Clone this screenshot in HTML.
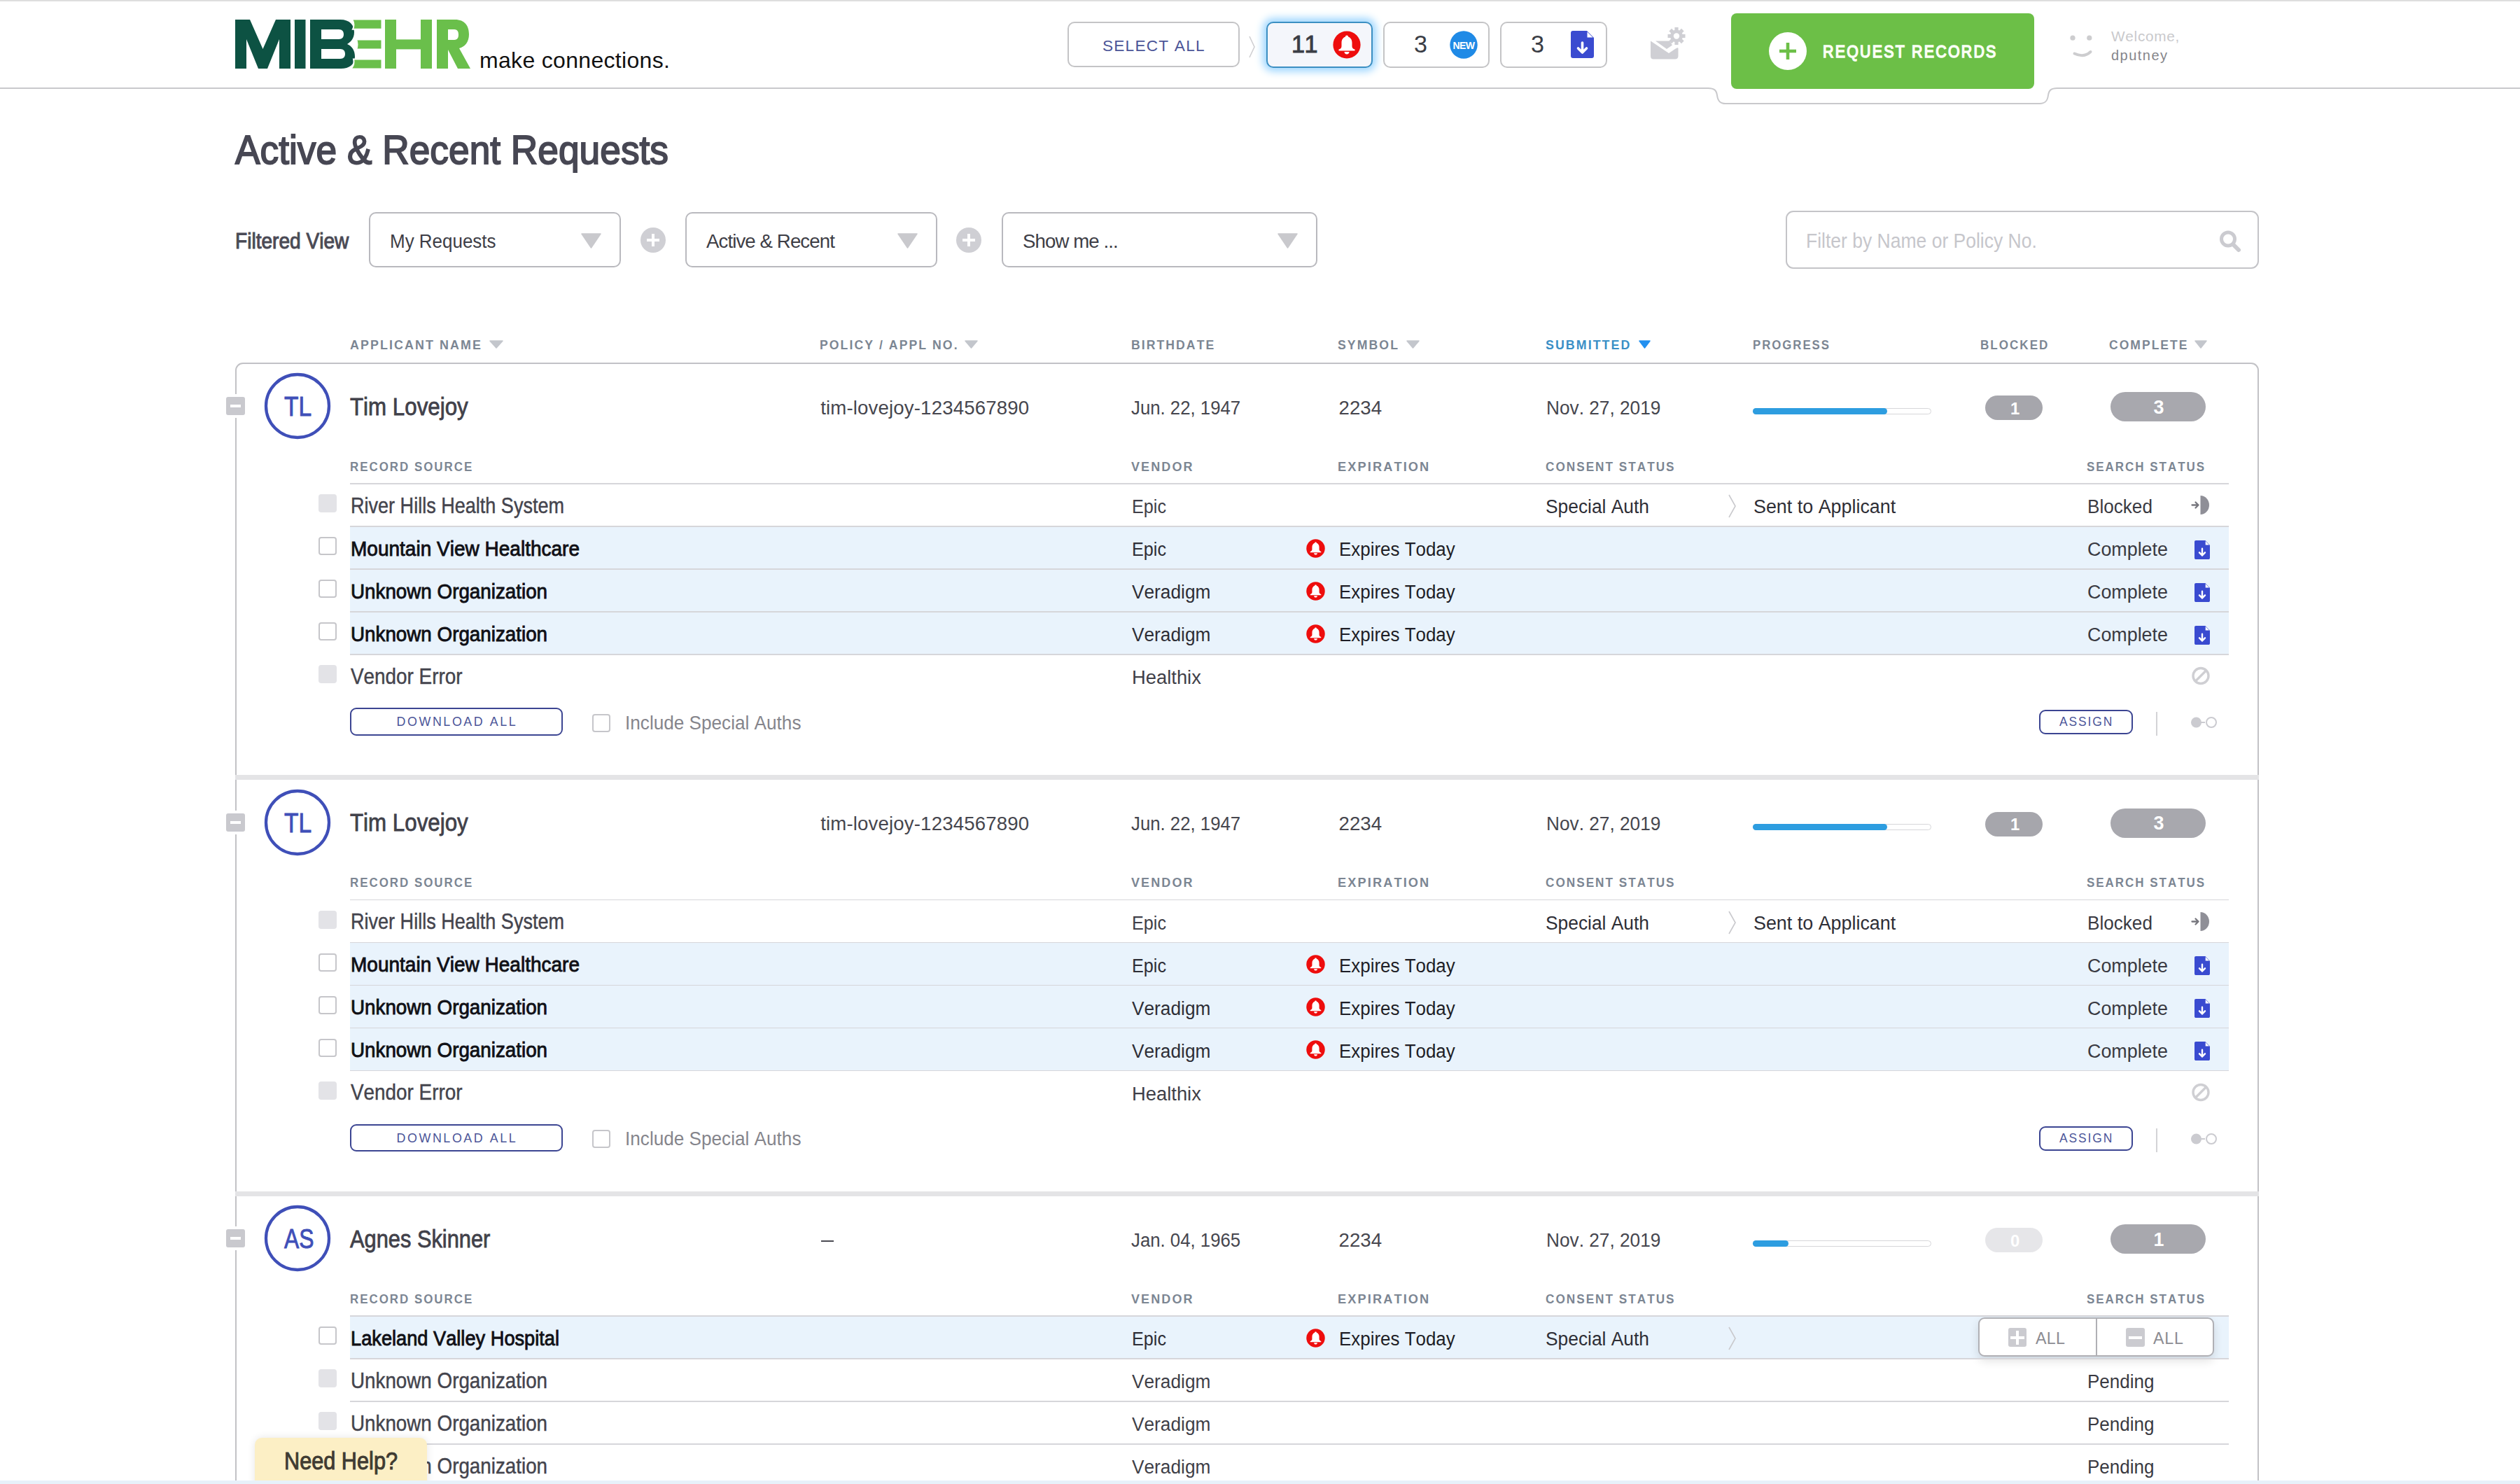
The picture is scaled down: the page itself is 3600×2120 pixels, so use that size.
<!DOCTYPE html>
<html><head><meta charset="utf-8"><title>MIB EHR</title>
<style>
html,body{margin:0;padding:0;background:#fff;}
body{width:3600px;height:2120px;position:relative;overflow:hidden;font-family:"Liberation Sans",sans-serif;}
.t{position:absolute;white-space:nowrap;font-kerning:none;font-feature-settings:"kern" 0,"liga" 0;}
.r{position:absolute;}
svg{display:block;}
</style></head><body>
<div class="r" style="left:0px;top:0px;width:3600px;height:1.5px;background:#dedede;"></div>
<svg class="r" style="left:0;top:0" width="3600" height="160"><path d="M0 126 H2440 C2449 126 2452 129 2453 136 C2454 144 2457 148 2465 148 H2914 C2922 148 2925 144 2926 136 C2927 129 2930 126 2939 126 H3600" fill="none" stroke="#c9c9cc" stroke-width="2"/></svg>
<svg class="r" style="left:0;top:0" width="1000" height="120">
<polygon fill="#0d5243" points="336,28 357,28 375.5,70 394,28 415,28 415,98 399,98 399,56 382,98 369,98 352,56 352,98 336,98"/>
<rect fill="#0d5243" x="421" y="28" width="15.5" height="70"/>
<path fill="#0d5243" d="M443 28 H486 C500 28 506 36 506 46 C506 55 501 60 496 63 C503 66 507 72 507 81 C507 92 499 98 487 98 H443 Z M459 42 V56 H484 C489 56 491 53 491 49 C491 45 489 42 484 42 Z M459 70 V84 H486 C491 84 493 81 493 77 C493 73 491 70 486 70 Z"/>
<path fill="#6abf4b" stroke="#fff" stroke-width="2" d="M503 27.5 H545.5 V41.7 H504 C506 38 506 32 503 27.5 Z"/>
<path fill="#6abf4b" stroke="#fff" stroke-width="2" d="M509 56.4 H545.5 V70.5 H509 C511 67 511 60 509 56.4 Z"/>
<path fill="#6abf4b" stroke="#fff" stroke-width="2" d="M505 84.4 H545.5 V98.5 H501 C505 95 506 89 505 84.4 Z"/>
<rect fill="#6abf4b" x="550" y="28" width="16" height="70"/>
<rect fill="#6abf4b" x="601" y="28" width="16" height="70"/>
<rect fill="#6abf4b" x="566" y="56.4" width="35" height="14"/>
<path fill="#6abf4b" d="M624 28 H650 C664 28 670 37 670 49 C670 60 664 67 656 69 L672 98 H654 L640 71 V98 H624 Z M640 42 V57 H649 C654 57 655 53 655 49.5 C655 46 654 42 649 42 Z"/>
</svg>
<div class="t" style="left:685.00px;top:67.41px;font-size:32px;line-height:38px;color:#111;letter-spacing:0.32px;">make connections.</div>
<div class="r" style="left:1525px;top:31px;width:246px;height:65px;border:2px solid #c4c4c6;border-radius:10px;box-sizing:border-box;background:#fff;"></div>
<div class="t" style="left:1575.00px;top:51.64px;font-size:22.67px;line-height:27px;color:#4b5598;letter-spacing:1.20px;">SELECT ALL</div>
<svg class="r" style="left:1780px;top:48px" width="20" height="40"><path d="M5 4 L12 19 L5 34" fill="none" stroke="#cfcfd2" stroke-width="1.6"/></svg>
<div class="r" style="left:1809px;top:31px;width:152px;height:66px;border:2px solid #3b8fc2;border-radius:10px;box-sizing:border-box;background:#f4f6fb;box-shadow:0 0 12px 5px #9dd6ff;"></div>
<div class="t" style="left:1845.00px;top:42.66px;font-size:34.16px;line-height:41px;color:#3a3d45;-webkit-text-stroke:1.0px #3a3d45;">1</div>
<div class="t" style="left:1863.50px;top:42.66px;font-size:34.16px;line-height:41px;color:#3a3d45;-webkit-text-stroke:1.0px #3a3d45;">1</div>
<svg class="r" style="left:1904px;top:44px" width="40" height="40" viewBox="0 0 40 40"><circle cx="20" cy="20" r="19.6" fill="#ee0d0d"/><path fill="#fff" d="M20 6.5 C21.3 6.5 22 7.3 22 8.4 C25.5 9.6 27.5 12.8 27.5 17 V22 C27.5 24.5 29 26 31.5 26.5 V28.5 H8.5 V26.5 C11 26 12.5 24.5 12.5 22 V17 C12.5 12.8 14.5 9.6 18 8.4 C18 7.3 18.7 6.5 20 6.5 Z"/><path fill="#fff" d="M16.5 30 H23.5 C23.5 32.2 22 33.5 20 33.5 C18 33.5 16.5 32.2 16.5 30 Z"/></svg>
<div class="r" style="left:1976px;top:31px;width:152px;height:66px;border:2px solid #c4c4c6;border-radius:10px;box-sizing:border-box;background:#fff;"></div>
<div class="t" style="left:2020.00px;top:42.66px;font-size:34.16px;line-height:41px;color:#3a3d45;">3</div>
<svg class="r" style="left:2071px;top:44px" width="40" height="40"><circle cx="20" cy="20" r="19.7" fill="#1f8ae6"/><text x="20" y="25.5" text-anchor="middle" font-family="Liberation Sans" font-weight="700" font-size="14" fill="#fff" letter-spacing="-0.5">NEW</text></svg>
<div class="r" style="left:2143px;top:31px;width:153px;height:66px;border:2px solid #c4c4c6;border-radius:10px;box-sizing:border-box;background:#fff;"></div>
<div class="t" style="left:2187.00px;top:42.66px;font-size:34.16px;line-height:41px;color:#3a3d45;">3</div>
<svg class="r" style="left:2244px;top:43.6px" width="33" height="39" viewBox="0 0 33 39" preserveAspectRatio="none"><path fill="#3a4bd0" d="M3 0 H23 L33 10 V36 C33 37.8 31.8 39 30 39 H3 C1.2 39 0 37.8 0 36 V3 C0 1.2 1.2 0 3 0 Z"/><path fill="#fff" d="M23.5 1.5 L31.5 9.5 H23.5 Z"/><path fill="none" stroke="#fff" stroke-width="3.6" stroke-linecap="round" stroke-linejoin="round" d="M16.5 17 V31 M10.5 25 L16.5 31 L22.5 25"/></svg>
<svg class="r" style="left:2350px;top:34px" width="70" height="56">
<path fill="#cfcfd4" d="M8 24.5 L34 42 L41.5 37 C44 35 47.5 33 47.5 35 V46 C47.5 49 45.5 50.5 43 50.5 H12 C9.5 50.5 8 49 8 46 Z"/>
<path fill="#cfcfd4" d="M15 24.5 H35 L39 30.5 L31 36 Z"/>
<g transform="translate(45 17.5)"><circle r="9" fill="#cfcfd4"/><g fill="#cfcfd4"><rect x="-2.6" y="-12.5" width="5.2" height="25"/><rect x="-2.6" y="-12.5" width="5.2" height="25" transform="rotate(45)"/><rect x="-2.6" y="-12.5" width="5.2" height="25" transform="rotate(90)"/><rect x="-2.6" y="-12.5" width="5.2" height="25" transform="rotate(135)"/></g><circle r="4.2" fill="#fff"/></g>
</svg>
<div class="r" style="left:2473px;top:19px;width:433px;height:108px;background:#6cbf47;border-radius:8px;"></div>
<svg class="r" style="left:2526px;top:45px" width="56" height="56"><circle cx="28" cy="28" r="27" fill="#fff"/><rect x="16" y="25.7" width="24" height="4.6" fill="#6cbf47"/><rect x="25.7" y="16" width="4.6" height="24" fill="#6cbf47"/></svg>
<div class="t" style="left:2604.00px;top:58.93px;font-size:24.71px;line-height:30px;color:#fafff5;-webkit-text-stroke:1.6px #fafff5;letter-spacing:2.60px;transform:scaleX(0.8641);transform-origin:0 0;">REQUEST RECORDS</div>
<svg class="r" style="left:2950px;top:44px" width="44" height="44"><circle cx="11" cy="10.2" r="3.6" fill="#cdcdcf"/><circle cx="34.8" cy="10.2" r="3.6" fill="#cdcdcf"/><path d="M13.5 32.5 Q27 39 36.5 30" fill="none" stroke="#cdcdcf" stroke-width="4" stroke-linecap="round"/></svg>
<div class="t" style="left:3016.00px;top:38.89px;font-size:20.79px;line-height:25px;color:#c9c9cc;letter-spacing:0.71px;">Welcome,</div>
<div class="t" style="left:3016.00px;top:67.07px;font-size:20px;line-height:24px;color:#85858a;letter-spacing:1.47px;">dputney</div>
<div class="t" style="left:336.00px;top:179.90px;font-size:57.12px;line-height:69px;color:#474753;-webkit-text-stroke:1.9px #474753;transform:scaleX(0.9330);transform-origin:0 0;">Active &amp; Recent Requests</div>
<div class="t" style="left:336.00px;top:325.52px;font-size:30.52px;line-height:37px;color:#4a4a55;-webkit-text-stroke:1.0px #4a4a55;transform:scaleX(0.9207);transform-origin:0 0;">Filtered View</div>
<div class="r" style="left:527px;top:303px;width:360px;height:79px;border:2px solid #b9b9be;border-radius:10px;box-sizing:border-box;background:#fff;"></div>
<div class="t" style="left:557.00px;top:328.32px;font-size:27.62px;line-height:33px;color:#3e3e46;transform:scaleX(0.9407);transform-origin:0 0;">My Requests</div>
<svg class="r" style="left:830px;top:333px" width="29" height="22"><path d="M1 1 H28 L14.5 21 Z" fill="#c9c9cd" stroke="#c9c9cd" stroke-width="1.5" stroke-linejoin="round"/></svg>
<div class="r" style="left:979px;top:303px;width:360px;height:79px;border:2px solid #b9b9be;border-radius:10px;box-sizing:border-box;background:#fff;"></div>
<div class="t" style="left:1009.00px;top:328.32px;font-size:27.62px;line-height:33px;color:#3e3e46;letter-spacing:-0.90px;">Active &amp; Recent</div>
<svg class="r" style="left:1282px;top:333px" width="29" height="22"><path d="M1 1 H28 L14.5 21 Z" fill="#c9c9cd" stroke="#c9c9cd" stroke-width="1.5" stroke-linejoin="round"/></svg>
<div class="r" style="left:1431px;top:303px;width:451px;height:79px;border:2px solid #b9b9be;border-radius:10px;box-sizing:border-box;background:#fff;"></div>
<div class="t" style="left:1461.00px;top:328.32px;font-size:27.62px;line-height:33px;color:#3e3e46;letter-spacing:-0.90px;">Show me ...</div>
<svg class="r" style="left:1825px;top:333px" width="29" height="22"><path d="M1 1 H28 L14.5 21 Z" fill="#c9c9cd" stroke="#c9c9cd" stroke-width="1.5" stroke-linejoin="round"/></svg>
<svg class="r" style="left:914px;top:324px" width="38" height="38"><circle cx="19" cy="19" r="18" fill="#cfcfd4"/><rect x="10" y="17" width="18" height="4" fill="#fff"/><rect x="17" y="10" width="4" height="18" fill="#fff"/></svg>
<svg class="r" style="left:1365px;top:324px" width="38" height="38"><circle cx="19" cy="19" r="18" fill="#cfcfd4"/><rect x="10" y="17" width="18" height="4" fill="#fff"/><rect x="17" y="10" width="4" height="18" fill="#fff"/></svg>
<div class="r" style="left:2551px;top:301px;width:676px;height:83px;border:2px solid #c4c4c8;border-radius:11px;box-sizing:border-box;background:#fff;"></div>
<div class="t" style="left:2580.00px;top:327.42px;font-size:29.07px;line-height:35px;color:#c6c6cb;transform:scaleX(0.9118);transform-origin:0 0;">Filter by Name or Policy No.</div>
<svg class="r" style="left:3168px;top:327px" width="36" height="36"><circle cx="15" cy="14.5" r="9.5" fill="none" stroke="#cbcbd0" stroke-width="5"/><path d="M22 22 L30 30" stroke="#cbcbd0" stroke-width="6" stroke-linecap="round"/></svg>
<div class="t" style="left:500.00px;top:480.95px;font-size:18.9px;line-height:23px;color:#7c8693;font-weight:700;letter-spacing:2.20px;transform:scaleX(0.9461);transform-origin:0 0;">APPLICANT NAME</div>
<svg class="r" style="left:699px;top:486px" width="20" height="12"><path d="M1 1 H19 L10.0 11 Z" fill="#c3c6cc" stroke="#c3c6cc" stroke-width="1.5" stroke-linejoin="round"/></svg>
<div class="t" style="left:1171.40px;top:480.95px;font-size:18.9px;line-height:23px;color:#7c8693;font-weight:700;letter-spacing:2.20px;transform:scaleX(0.9337);transform-origin:0 0;">POLICY / APPL NO.</div>
<svg class="r" style="left:1378px;top:486px" width="19" height="12"><path d="M1 1 H18 L9.5 11 Z" fill="#c3c6cc" stroke="#c3c6cc" stroke-width="1.5" stroke-linejoin="round"/></svg>
<div class="t" style="left:1616.00px;top:480.95px;font-size:18.9px;line-height:23px;color:#7c8693;font-weight:700;letter-spacing:2.20px;transform:scaleX(0.9328);transform-origin:0 0;">BIRTHDATE</div>
<div class="t" style="left:1911.40px;top:480.95px;font-size:18.9px;line-height:23px;color:#7c8693;font-weight:700;letter-spacing:2.20px;transform:scaleX(0.9359);transform-origin:0 0;">SYMBOL</div>
<svg class="r" style="left:2009px;top:486px" width="19" height="12"><path d="M1 1 H18 L9.5 11 Z" fill="#c3c6cc" stroke="#c3c6cc" stroke-width="1.5" stroke-linejoin="round"/></svg>
<div class="t" style="left:2208.20px;top:480.95px;font-size:18.9px;line-height:23px;color:#3a8fc6;font-weight:700;letter-spacing:2.20px;transform:scaleX(0.9415);transform-origin:0 0;">SUBMITTED</div>
<svg class="r" style="left:2341px;top:486px" width="17" height="12"><path d="M1 1 H16 L8.5 11 Z" fill="#2290f0" stroke="#2290f0" stroke-width="1.5" stroke-linejoin="round"/></svg>
<div class="t" style="left:2504.30px;top:480.95px;font-size:18.9px;line-height:23px;color:#7c8693;font-weight:700;letter-spacing:2.20px;transform:scaleX(0.8893);transform-origin:0 0;">PROGRESS</div>
<div class="t" style="left:2828.60px;top:480.95px;font-size:18.9px;line-height:23px;color:#7c8693;font-weight:700;letter-spacing:2.20px;transform:scaleX(0.9038);transform-origin:0 0;">BLOCKED</div>
<div class="t" style="left:3012.50px;top:480.95px;font-size:18.9px;line-height:23px;color:#7c8693;font-weight:700;letter-spacing:2.20px;transform:scaleX(0.9262);transform-origin:0 0;">COMPLETE</div>
<svg class="r" style="left:3135px;top:486px" width="18" height="12"><path d="M1 1 H17 L9.0 11 Z" fill="#c3c6cc" stroke="#c3c6cc" stroke-width="1.5" stroke-linejoin="round"/></svg>
<div class="r" style="left:336px;top:518px;width:2891px;height:1682px;border:2px solid #c2c2c6;border-radius:11px;box-sizing:border-box;"></div>
<div class="r" style="left:319px;top:563.4px;width:35px;height:34.0px;background:#fff;"></div>
<div class="r" style="left:323px;top:567.4px;width:26.600000000000023px;height:26.0px;background:#c9c9ce;border-radius:3px;"></div>
<div class="r" style="left:328.5px;top:578.4px;width:15.199999999999989px;height:4.0px;background:#fff;"></div>
<svg class="r" style="left:376px;top:531.2px" width="98" height="98"><circle cx="49" cy="49" r="45" fill="none" stroke="#3f4fb8" stroke-width="4.3"/></svg>
<div class="t" style="left:405.70px;top:557.20px;font-size:38.95px;line-height:47px;color:#3f4fb8;-webkit-text-stroke:0.9px #3f4fb8;transform:scaleX(0.8617);transform-origin:0 0;">TL</div>
<div class="t" style="left:500.40px;top:560.61px;font-size:34.3px;line-height:41px;color:#41414a;-webkit-text-stroke:0.8px #41414a;transform:scaleX(0.9125);transform-origin:0 0;">Tim Lovejoy</div>
<div class="t" style="left:1172.20px;top:565.72px;font-size:27.62px;line-height:33px;color:#46464e;letter-spacing:0.15px;">tim-lovejoy-1234567890</div>
<div class="t" style="left:1616.40px;top:565.72px;font-size:27.62px;line-height:33px;color:#46464e;transform:scaleX(0.9332);transform-origin:0 0;">Jun. 22, 1947</div>
<div class="t" style="left:1912.50px;top:565.72px;font-size:27.62px;line-height:33px;color:#46464e;letter-spacing:0.02px;">2234</div>
<div class="t" style="left:2209.00px;top:565.72px;font-size:27.62px;line-height:33px;color:#46464e;transform:scaleX(0.9502);transform-origin:0 0;">Nov. 27, 2019</div>
<div class="r" style="left:2504px;top:582.5px;width:255px;height:9.0px;border:1.5px solid #d6d6d9;border-radius:5px;box-sizing:border-box;background:#fff;"></div>
<div class="r" style="left:2504px;top:582.5px;width:192px;height:9.0px;background:#2d9de0;border-radius:5px;"></div>
<div class="r" style="left:2836px;top:565px;width:82px;height:35px;background:#a6a6ac;border-radius:18px;"></div>
<div class="t" style="left:2872.00px;top:568.64px;font-size:23.84px;line-height:29px;color:#fff;font-weight:700;">1</div>
<div class="r" style="left:3015px;top:560px;width:136px;height:42px;background:#a8a8ae;border-radius:21px;"></div>
<div class="t" style="left:3076.50px;top:565.68px;font-size:26.89px;line-height:32px;color:#fff;font-weight:700;">3</div>
<div class="t" style="left:500.30px;top:654.95px;font-size:18.9px;line-height:23px;color:#7c8693;font-weight:700;letter-spacing:2.20px;transform:scaleX(0.8965);transform-origin:0 0;">RECORD SOURCE</div>
<div class="t" style="left:1616.00px;top:654.95px;font-size:18.9px;line-height:23px;color:#7c8693;font-weight:700;letter-spacing:2.20px;transform:scaleX(0.9533);transform-origin:0 0;">VENDOR</div>
<div class="t" style="left:1911.40px;top:654.95px;font-size:18.9px;line-height:23px;color:#7c8693;font-weight:700;letter-spacing:2.20px;transform:scaleX(0.9630);transform-origin:0 0;">EXPIRATION</div>
<div class="t" style="left:2208.20px;top:654.95px;font-size:18.9px;line-height:23px;color:#7c8693;font-weight:700;letter-spacing:2.20px;transform:scaleX(0.9097);transform-origin:0 0;">CONSENT STATUS</div>
<div class="t" style="left:2981.40px;top:654.95px;font-size:18.9px;line-height:23px;color:#7c8693;font-weight:700;letter-spacing:2.20px;transform:scaleX(0.8989);transform-origin:0 0;">SEARCH STATUS</div>
<div class="r" style="left:500px;top:690.25px;width:2684px;height:1.5px;background:#d6d6da;"></div>
<div class="r" style="left:455px;top:706px;width:26px;height:26px;background:#e3e3e7;border-radius:4px;"></div>
<div class="t" style="left:500.50px;top:703.71px;font-size:31.11px;line-height:37px;color:#44444d;-webkit-text-stroke:0.45px #44444d;transform:scaleX(0.8691);transform-origin:0 0;">River Hills Health System</div>
<div class="t" style="left:1616.70px;top:706.22px;font-size:28.2px;line-height:34px;color:#3f3f48;transform:scaleX(0.8934);transform-origin:0 0;">Epic</div>
<div class="t" style="left:2208.00px;top:706.22px;font-size:28.2px;line-height:34px;color:#2e2e36;transform:scaleX(0.9350);transform-origin:0 0;">Special Auth</div>
<svg class="r" style="left:2467px;top:705px" width="16" height="36"><path d="M3 2 L12 18 L3 34" fill="none" stroke="#c9c9cd" stroke-width="1.6"/></svg>
<div class="t" style="left:2504.60px;top:706.22px;font-size:28.2px;line-height:34px;color:#2e2e36;transform:scaleX(0.9535);transform-origin:0 0;">Sent to Applicant</div>
<div class="t" style="left:2982.00px;top:706.22px;font-size:28.2px;line-height:34px;color:#3a3a42;transform:scaleX(0.9264);transform-origin:0 0;">Blocked</div>
<svg class="r" style="left:3126px;top:706px" width="34" height="30"><path d="M5.5 15.5 H14.5 M10.5 11.5 L14.5 15.5 L10.5 19.5" fill="none" stroke="#77777e" stroke-width="2.3" stroke-linecap="round" stroke-linejoin="round"/><path d="M17.5 2 A12.5 13.5 0 0 1 17.5 29 Z" fill="#8f8f97"/></svg>
<div class="r" style="left:500px;top:752px;width:2684px;height:61px;background:#e9f3fc;"></div>
<div class="r" style="left:500px;top:751.25px;width:2684px;height:1.5px;background:#d6d6da;"></div>
<div class="r" style="left:455px;top:767px;width:26px;height:26px;border:2px solid #c6c6ca;border-radius:4px;box-sizing:border-box;background:#fff;"></div>
<div class="t" style="left:500.50px;top:765.62px;font-size:29.94px;line-height:36px;color:#101016;-webkit-text-stroke:0.9px #101016;transform:scaleX(0.9357);transform-origin:0 0;">Mountain View Healthcare</div>
<div class="t" style="left:1616.70px;top:767.22px;font-size:28.2px;line-height:34px;color:#2e2e36;transform:scaleX(0.8934);transform-origin:0 0;">Epic</div>
<svg class="r" style="left:1866px;top:769.5px" width="27" height="27" viewBox="0 0 40 40"><circle cx="20" cy="20" r="19.6" fill="#ee0d0d"/><path fill="#fff" d="M20 6.5 C21.3 6.5 22 7.3 22 8.4 C25.5 9.6 27.5 12.8 27.5 17 V22 C27.5 24.5 29 26 31.5 26.5 V28.5 H8.5 V26.5 C11 26 12.5 24.5 12.5 22 V17 C12.5 12.8 14.5 9.6 18 8.4 C18 7.3 18.7 6.5 20 6.5 Z"/><path fill="#fff" d="M16.5 30 H23.5 C23.5 32.2 22 33.5 20 33.5 C18 33.5 16.5 32.2 16.5 30 Z"/></svg>
<div class="t" style="left:1912.50px;top:767.22px;font-size:28.2px;line-height:34px;color:#1e1e26;transform:scaleX(0.9198);transform-origin:0 0;">Expires Today</div>
<div class="t" style="left:2982.00px;top:767.22px;font-size:28.2px;line-height:34px;color:#3a3a42;transform:scaleX(0.9528);transform-origin:0 0;">Complete</div>
<svg class="r" style="left:3135px;top:771.5px" width="22" height="27" viewBox="0 0 33 39" preserveAspectRatio="none"><path fill="#3a4bd0" d="M3 0 H23 L33 10 V36 C33 37.8 31.8 39 30 39 H3 C1.2 39 0 37.8 0 36 V3 C0 1.2 1.2 0 3 0 Z"/><path fill="#fff" d="M23.5 1.5 L31.5 9.5 H23.5 Z"/><path fill="none" stroke="#fff" stroke-width="3.6" stroke-linecap="round" stroke-linejoin="round" d="M16.5 17 V31 M10.5 25 L16.5 31 L22.5 25"/></svg>
<div class="r" style="left:500px;top:813px;width:2684px;height:61px;background:#e9f3fc;"></div>
<div class="r" style="left:500px;top:812.25px;width:2684px;height:1.5px;background:#d6d6da;"></div>
<div class="r" style="left:455px;top:828px;width:26px;height:26px;border:2px solid #c6c6ca;border-radius:4px;box-sizing:border-box;background:#fff;"></div>
<div class="t" style="left:500.50px;top:826.62px;font-size:29.94px;line-height:36px;color:#101016;-webkit-text-stroke:0.9px #101016;transform:scaleX(0.9279);transform-origin:0 0;">Unknown Organization</div>
<div class="t" style="left:1616.70px;top:828.22px;font-size:28.2px;line-height:34px;color:#2e2e36;transform:scaleX(0.9316);transform-origin:0 0;">Veradigm</div>
<svg class="r" style="left:1866px;top:830.5px" width="27" height="27" viewBox="0 0 40 40"><circle cx="20" cy="20" r="19.6" fill="#ee0d0d"/><path fill="#fff" d="M20 6.5 C21.3 6.5 22 7.3 22 8.4 C25.5 9.6 27.5 12.8 27.5 17 V22 C27.5 24.5 29 26 31.5 26.5 V28.5 H8.5 V26.5 C11 26 12.5 24.5 12.5 22 V17 C12.5 12.8 14.5 9.6 18 8.4 C18 7.3 18.7 6.5 20 6.5 Z"/><path fill="#fff" d="M16.5 30 H23.5 C23.5 32.2 22 33.5 20 33.5 C18 33.5 16.5 32.2 16.5 30 Z"/></svg>
<div class="t" style="left:1912.50px;top:828.22px;font-size:28.2px;line-height:34px;color:#1e1e26;transform:scaleX(0.9198);transform-origin:0 0;">Expires Today</div>
<div class="t" style="left:2982.00px;top:828.22px;font-size:28.2px;line-height:34px;color:#3a3a42;transform:scaleX(0.9528);transform-origin:0 0;">Complete</div>
<svg class="r" style="left:3135px;top:832.5px" width="22" height="27" viewBox="0 0 33 39" preserveAspectRatio="none"><path fill="#3a4bd0" d="M3 0 H23 L33 10 V36 C33 37.8 31.8 39 30 39 H3 C1.2 39 0 37.8 0 36 V3 C0 1.2 1.2 0 3 0 Z"/><path fill="#fff" d="M23.5 1.5 L31.5 9.5 H23.5 Z"/><path fill="none" stroke="#fff" stroke-width="3.6" stroke-linecap="round" stroke-linejoin="round" d="M16.5 17 V31 M10.5 25 L16.5 31 L22.5 25"/></svg>
<div class="r" style="left:500px;top:874px;width:2684px;height:61px;background:#e9f3fc;"></div>
<div class="r" style="left:500px;top:873.25px;width:2684px;height:1.5px;background:#d6d6da;"></div>
<div class="r" style="left:455px;top:889px;width:26px;height:26px;border:2px solid #c6c6ca;border-radius:4px;box-sizing:border-box;background:#fff;"></div>
<div class="t" style="left:500.50px;top:887.62px;font-size:29.94px;line-height:36px;color:#101016;-webkit-text-stroke:0.9px #101016;transform:scaleX(0.9279);transform-origin:0 0;">Unknown Organization</div>
<div class="t" style="left:1616.70px;top:889.22px;font-size:28.2px;line-height:34px;color:#2e2e36;transform:scaleX(0.9316);transform-origin:0 0;">Veradigm</div>
<svg class="r" style="left:1866px;top:891.5px" width="27" height="27" viewBox="0 0 40 40"><circle cx="20" cy="20" r="19.6" fill="#ee0d0d"/><path fill="#fff" d="M20 6.5 C21.3 6.5 22 7.3 22 8.4 C25.5 9.6 27.5 12.8 27.5 17 V22 C27.5 24.5 29 26 31.5 26.5 V28.5 H8.5 V26.5 C11 26 12.5 24.5 12.5 22 V17 C12.5 12.8 14.5 9.6 18 8.4 C18 7.3 18.7 6.5 20 6.5 Z"/><path fill="#fff" d="M16.5 30 H23.5 C23.5 32.2 22 33.5 20 33.5 C18 33.5 16.5 32.2 16.5 30 Z"/></svg>
<div class="t" style="left:1912.50px;top:889.22px;font-size:28.2px;line-height:34px;color:#1e1e26;transform:scaleX(0.9198);transform-origin:0 0;">Expires Today</div>
<div class="t" style="left:2982.00px;top:889.22px;font-size:28.2px;line-height:34px;color:#3a3a42;transform:scaleX(0.9528);transform-origin:0 0;">Complete</div>
<svg class="r" style="left:3135px;top:893.5px" width="22" height="27" viewBox="0 0 33 39" preserveAspectRatio="none"><path fill="#3a4bd0" d="M3 0 H23 L33 10 V36 C33 37.8 31.8 39 30 39 H3 C1.2 39 0 37.8 0 36 V3 C0 1.2 1.2 0 3 0 Z"/><path fill="#fff" d="M23.5 1.5 L31.5 9.5 H23.5 Z"/><path fill="none" stroke="#fff" stroke-width="3.6" stroke-linecap="round" stroke-linejoin="round" d="M16.5 17 V31 M10.5 25 L16.5 31 L22.5 25"/></svg>
<div class="r" style="left:500px;top:934.25px;width:2684px;height:1.5px;background:#d6d6da;"></div>
<div class="r" style="left:455px;top:950px;width:26px;height:26px;background:#e3e3e7;border-radius:4px;"></div>
<div class="t" style="left:500.50px;top:947.71px;font-size:31.11px;line-height:37px;color:#44444d;-webkit-text-stroke:0.45px #44444d;transform:scaleX(0.8957);transform-origin:0 0;">Vendor Error</div>
<div class="t" style="left:1616.70px;top:950.22px;font-size:28.2px;line-height:34px;color:#3f3f48;transform:scaleX(0.9711);transform-origin:0 0;">Healthix</div>
<svg class="r" style="left:3130px;top:952px" width="28" height="28"><circle cx="14" cy="13.5" r="11" fill="none" stroke="#cfcfd3" stroke-width="3.4"/><path d="M7 20.5 L21 6.5" stroke="#cfcfd3" stroke-width="3.4"/></svg>
<div class="r" style="left:500px;top:1011.4px;width:304.29999999999995px;height:39.39999999999998px;border:2.5px solid #3c4592;border-radius:9px;box-sizing:border-box;background:#fff;"></div>
<div class="t" style="left:566.50px;top:1021.30px;font-size:17.88px;line-height:21px;color:#4b5598;letter-spacing:2.58px;">DOWNLOAD ALL</div>
<div class="r" style="left:846px;top:1019.8px;width:26px;height:26.0px;border:2px solid #c6c6ca;border-radius:4px;box-sizing:border-box;background:#fff;"></div>
<div class="t" style="left:893.00px;top:1014.92px;font-size:28.49px;line-height:34px;color:#85858c;transform:scaleX(0.9179);transform-origin:0 0;">Include Special Auths</div>
<div class="r" style="left:2913px;top:1014px;width:134px;height:35px;border:2.5px solid #3c4592;border-radius:9px;box-sizing:border-box;background:#fff;"></div>
<div class="t" style="left:2942.00px;top:1021.35px;font-size:17.44px;line-height:21px;color:#4b5598;letter-spacing:1.90px;">ASSIGN</div>
<div class="r" style="left:3080px;top:1017px;width:2px;height:34px;background:#d3d3d6;"></div>
<svg class="r" style="left:3126px;top:1020px" width="44" height="24"><circle cx="11.5" cy="12" r="7.5" fill="#cbcbd0"/><path d="M18 12 H24" stroke="#cbcbd0" stroke-width="2"/><circle cx="33" cy="12" r="7" fill="#fff" stroke="#cbcbd0" stroke-width="2"/></svg>
<div class="r" style="left:336px;top:1107.0px;width:2891px;height:7.0px;background:#e4e4e6;"></div>
<div class="r" style="left:319px;top:1157.9px;width:35px;height:34.0px;background:#fff;"></div>
<div class="r" style="left:323px;top:1161.9px;width:26.600000000000023px;height:26.0px;background:#c9c9ce;border-radius:3px;"></div>
<div class="r" style="left:328.5px;top:1172.9px;width:15.199999999999989px;height:4.0px;background:#fff;"></div>
<svg class="r" style="left:376px;top:1125.7px" width="98" height="98"><circle cx="49" cy="49" r="45" fill="none" stroke="#3f4fb8" stroke-width="4.3"/></svg>
<div class="t" style="left:405.70px;top:1151.70px;font-size:38.95px;line-height:47px;color:#3f4fb8;-webkit-text-stroke:0.9px #3f4fb8;transform:scaleX(0.8617);transform-origin:0 0;">TL</div>
<div class="t" style="left:500.40px;top:1155.11px;font-size:34.3px;line-height:41px;color:#41414a;-webkit-text-stroke:0.8px #41414a;transform:scaleX(0.9125);transform-origin:0 0;">Tim Lovejoy</div>
<div class="t" style="left:1172.20px;top:1160.22px;font-size:27.62px;line-height:33px;color:#46464e;letter-spacing:0.15px;">tim-lovejoy-1234567890</div>
<div class="t" style="left:1616.40px;top:1160.22px;font-size:27.62px;line-height:33px;color:#46464e;transform:scaleX(0.9332);transform-origin:0 0;">Jun. 22, 1947</div>
<div class="t" style="left:1912.50px;top:1160.22px;font-size:27.62px;line-height:33px;color:#46464e;letter-spacing:0.02px;">2234</div>
<div class="t" style="left:2209.00px;top:1160.22px;font-size:27.62px;line-height:33px;color:#46464e;transform:scaleX(0.9502);transform-origin:0 0;">Nov. 27, 2019</div>
<div class="r" style="left:2504px;top:1177.0px;width:255px;height:9.0px;border:1.5px solid #d6d6d9;border-radius:5px;box-sizing:border-box;background:#fff;"></div>
<div class="r" style="left:2504px;top:1177.0px;width:192px;height:9.0px;background:#2d9de0;border-radius:5px;"></div>
<div class="r" style="left:2836px;top:1159.5px;width:82px;height:35.0px;background:#a6a6ac;border-radius:18px;"></div>
<div class="t" style="left:2872.00px;top:1163.14px;font-size:23.84px;line-height:29px;color:#fff;font-weight:700;">1</div>
<div class="r" style="left:3015px;top:1154.5px;width:136px;height:42.0px;background:#a8a8ae;border-radius:21px;"></div>
<div class="t" style="left:3076.50px;top:1160.18px;font-size:26.89px;line-height:32px;color:#fff;font-weight:700;">3</div>
<div class="t" style="left:500.30px;top:1249.45px;font-size:18.9px;line-height:23px;color:#7c8693;font-weight:700;letter-spacing:2.20px;transform:scaleX(0.8965);transform-origin:0 0;">RECORD SOURCE</div>
<div class="t" style="left:1616.00px;top:1249.45px;font-size:18.9px;line-height:23px;color:#7c8693;font-weight:700;letter-spacing:2.20px;transform:scaleX(0.9533);transform-origin:0 0;">VENDOR</div>
<div class="t" style="left:1911.40px;top:1249.45px;font-size:18.9px;line-height:23px;color:#7c8693;font-weight:700;letter-spacing:2.20px;transform:scaleX(0.9630);transform-origin:0 0;">EXPIRATION</div>
<div class="t" style="left:2208.20px;top:1249.45px;font-size:18.9px;line-height:23px;color:#7c8693;font-weight:700;letter-spacing:2.20px;transform:scaleX(0.9097);transform-origin:0 0;">CONSENT STATUS</div>
<div class="t" style="left:2981.40px;top:1249.45px;font-size:18.9px;line-height:23px;color:#7c8693;font-weight:700;letter-spacing:2.20px;transform:scaleX(0.8989);transform-origin:0 0;">SEARCH STATUS</div>
<div class="r" style="left:500px;top:1284.75px;width:2684px;height:1.5px;background:#d6d6da;"></div>
<div class="r" style="left:455px;top:1300.5px;width:26px;height:26.0px;background:#e3e3e7;border-radius:4px;"></div>
<div class="t" style="left:500.50px;top:1298.21px;font-size:31.11px;line-height:37px;color:#44444d;-webkit-text-stroke:0.45px #44444d;transform:scaleX(0.8691);transform-origin:0 0;">River Hills Health System</div>
<div class="t" style="left:1616.70px;top:1300.72px;font-size:28.2px;line-height:34px;color:#3f3f48;transform:scaleX(0.8934);transform-origin:0 0;">Epic</div>
<div class="t" style="left:2208.00px;top:1300.72px;font-size:28.2px;line-height:34px;color:#2e2e36;transform:scaleX(0.9350);transform-origin:0 0;">Special Auth</div>
<svg class="r" style="left:2467px;top:1299.5px" width="16" height="36"><path d="M3 2 L12 18 L3 34" fill="none" stroke="#c9c9cd" stroke-width="1.6"/></svg>
<div class="t" style="left:2504.60px;top:1300.72px;font-size:28.2px;line-height:34px;color:#2e2e36;transform:scaleX(0.9535);transform-origin:0 0;">Sent to Applicant</div>
<div class="t" style="left:2982.00px;top:1300.72px;font-size:28.2px;line-height:34px;color:#3a3a42;transform:scaleX(0.9264);transform-origin:0 0;">Blocked</div>
<svg class="r" style="left:3126px;top:1300.5px" width="34" height="30"><path d="M5.5 15.5 H14.5 M10.5 11.5 L14.5 15.5 L10.5 19.5" fill="none" stroke="#77777e" stroke-width="2.3" stroke-linecap="round" stroke-linejoin="round"/><path d="M17.5 2 A12.5 13.5 0 0 1 17.5 29 Z" fill="#8f8f97"/></svg>
<div class="r" style="left:500px;top:1346.5px;width:2684px;height:61.0px;background:#e9f3fc;"></div>
<div class="r" style="left:500px;top:1345.75px;width:2684px;height:1.5px;background:#d6d6da;"></div>
<div class="r" style="left:455px;top:1361.5px;width:26px;height:26.0px;border:2px solid #c6c6ca;border-radius:4px;box-sizing:border-box;background:#fff;"></div>
<div class="t" style="left:500.50px;top:1360.12px;font-size:29.94px;line-height:36px;color:#101016;-webkit-text-stroke:0.9px #101016;transform:scaleX(0.9357);transform-origin:0 0;">Mountain View Healthcare</div>
<div class="t" style="left:1616.70px;top:1361.72px;font-size:28.2px;line-height:34px;color:#2e2e36;transform:scaleX(0.8934);transform-origin:0 0;">Epic</div>
<svg class="r" style="left:1866px;top:1364.0px" width="27" height="27" viewBox="0 0 40 40"><circle cx="20" cy="20" r="19.6" fill="#ee0d0d"/><path fill="#fff" d="M20 6.5 C21.3 6.5 22 7.3 22 8.4 C25.5 9.6 27.5 12.8 27.5 17 V22 C27.5 24.5 29 26 31.5 26.5 V28.5 H8.5 V26.5 C11 26 12.5 24.5 12.5 22 V17 C12.5 12.8 14.5 9.6 18 8.4 C18 7.3 18.7 6.5 20 6.5 Z"/><path fill="#fff" d="M16.5 30 H23.5 C23.5 32.2 22 33.5 20 33.5 C18 33.5 16.5 32.2 16.5 30 Z"/></svg>
<div class="t" style="left:1912.50px;top:1361.72px;font-size:28.2px;line-height:34px;color:#1e1e26;transform:scaleX(0.9198);transform-origin:0 0;">Expires Today</div>
<div class="t" style="left:2982.00px;top:1361.72px;font-size:28.2px;line-height:34px;color:#3a3a42;transform:scaleX(0.9528);transform-origin:0 0;">Complete</div>
<svg class="r" style="left:3135px;top:1366.0px" width="22" height="27" viewBox="0 0 33 39" preserveAspectRatio="none"><path fill="#3a4bd0" d="M3 0 H23 L33 10 V36 C33 37.8 31.8 39 30 39 H3 C1.2 39 0 37.8 0 36 V3 C0 1.2 1.2 0 3 0 Z"/><path fill="#fff" d="M23.5 1.5 L31.5 9.5 H23.5 Z"/><path fill="none" stroke="#fff" stroke-width="3.6" stroke-linecap="round" stroke-linejoin="round" d="M16.5 17 V31 M10.5 25 L16.5 31 L22.5 25"/></svg>
<div class="r" style="left:500px;top:1407.5px;width:2684px;height:61.0px;background:#e9f3fc;"></div>
<div class="r" style="left:500px;top:1406.75px;width:2684px;height:1.5px;background:#d6d6da;"></div>
<div class="r" style="left:455px;top:1422.5px;width:26px;height:26.0px;border:2px solid #c6c6ca;border-radius:4px;box-sizing:border-box;background:#fff;"></div>
<div class="t" style="left:500.50px;top:1421.12px;font-size:29.94px;line-height:36px;color:#101016;-webkit-text-stroke:0.9px #101016;transform:scaleX(0.9279);transform-origin:0 0;">Unknown Organization</div>
<div class="t" style="left:1616.70px;top:1422.72px;font-size:28.2px;line-height:34px;color:#2e2e36;transform:scaleX(0.9316);transform-origin:0 0;">Veradigm</div>
<svg class="r" style="left:1866px;top:1425.0px" width="27" height="27" viewBox="0 0 40 40"><circle cx="20" cy="20" r="19.6" fill="#ee0d0d"/><path fill="#fff" d="M20 6.5 C21.3 6.5 22 7.3 22 8.4 C25.5 9.6 27.5 12.8 27.5 17 V22 C27.5 24.5 29 26 31.5 26.5 V28.5 H8.5 V26.5 C11 26 12.5 24.5 12.5 22 V17 C12.5 12.8 14.5 9.6 18 8.4 C18 7.3 18.7 6.5 20 6.5 Z"/><path fill="#fff" d="M16.5 30 H23.5 C23.5 32.2 22 33.5 20 33.5 C18 33.5 16.5 32.2 16.5 30 Z"/></svg>
<div class="t" style="left:1912.50px;top:1422.72px;font-size:28.2px;line-height:34px;color:#1e1e26;transform:scaleX(0.9198);transform-origin:0 0;">Expires Today</div>
<div class="t" style="left:2982.00px;top:1422.72px;font-size:28.2px;line-height:34px;color:#3a3a42;transform:scaleX(0.9528);transform-origin:0 0;">Complete</div>
<svg class="r" style="left:3135px;top:1427.0px" width="22" height="27" viewBox="0 0 33 39" preserveAspectRatio="none"><path fill="#3a4bd0" d="M3 0 H23 L33 10 V36 C33 37.8 31.8 39 30 39 H3 C1.2 39 0 37.8 0 36 V3 C0 1.2 1.2 0 3 0 Z"/><path fill="#fff" d="M23.5 1.5 L31.5 9.5 H23.5 Z"/><path fill="none" stroke="#fff" stroke-width="3.6" stroke-linecap="round" stroke-linejoin="round" d="M16.5 17 V31 M10.5 25 L16.5 31 L22.5 25"/></svg>
<div class="r" style="left:500px;top:1468.5px;width:2684px;height:61.0px;background:#e9f3fc;"></div>
<div class="r" style="left:500px;top:1467.75px;width:2684px;height:1.5px;background:#d6d6da;"></div>
<div class="r" style="left:455px;top:1483.5px;width:26px;height:26.0px;border:2px solid #c6c6ca;border-radius:4px;box-sizing:border-box;background:#fff;"></div>
<div class="t" style="left:500.50px;top:1482.12px;font-size:29.94px;line-height:36px;color:#101016;-webkit-text-stroke:0.9px #101016;transform:scaleX(0.9279);transform-origin:0 0;">Unknown Organization</div>
<div class="t" style="left:1616.70px;top:1483.72px;font-size:28.2px;line-height:34px;color:#2e2e36;transform:scaleX(0.9316);transform-origin:0 0;">Veradigm</div>
<svg class="r" style="left:1866px;top:1486.0px" width="27" height="27" viewBox="0 0 40 40"><circle cx="20" cy="20" r="19.6" fill="#ee0d0d"/><path fill="#fff" d="M20 6.5 C21.3 6.5 22 7.3 22 8.4 C25.5 9.6 27.5 12.8 27.5 17 V22 C27.5 24.5 29 26 31.5 26.5 V28.5 H8.5 V26.5 C11 26 12.5 24.5 12.5 22 V17 C12.5 12.8 14.5 9.6 18 8.4 C18 7.3 18.7 6.5 20 6.5 Z"/><path fill="#fff" d="M16.5 30 H23.5 C23.5 32.2 22 33.5 20 33.5 C18 33.5 16.5 32.2 16.5 30 Z"/></svg>
<div class="t" style="left:1912.50px;top:1483.72px;font-size:28.2px;line-height:34px;color:#1e1e26;transform:scaleX(0.9198);transform-origin:0 0;">Expires Today</div>
<div class="t" style="left:2982.00px;top:1483.72px;font-size:28.2px;line-height:34px;color:#3a3a42;transform:scaleX(0.9528);transform-origin:0 0;">Complete</div>
<svg class="r" style="left:3135px;top:1488.0px" width="22" height="27" viewBox="0 0 33 39" preserveAspectRatio="none"><path fill="#3a4bd0" d="M3 0 H23 L33 10 V36 C33 37.8 31.8 39 30 39 H3 C1.2 39 0 37.8 0 36 V3 C0 1.2 1.2 0 3 0 Z"/><path fill="#fff" d="M23.5 1.5 L31.5 9.5 H23.5 Z"/><path fill="none" stroke="#fff" stroke-width="3.6" stroke-linecap="round" stroke-linejoin="round" d="M16.5 17 V31 M10.5 25 L16.5 31 L22.5 25"/></svg>
<div class="r" style="left:500px;top:1528.75px;width:2684px;height:1.5px;background:#d6d6da;"></div>
<div class="r" style="left:455px;top:1544.5px;width:26px;height:26.0px;background:#e3e3e7;border-radius:4px;"></div>
<div class="t" style="left:500.50px;top:1542.21px;font-size:31.11px;line-height:37px;color:#44444d;-webkit-text-stroke:0.45px #44444d;transform:scaleX(0.8957);transform-origin:0 0;">Vendor Error</div>
<div class="t" style="left:1616.70px;top:1544.72px;font-size:28.2px;line-height:34px;color:#3f3f48;transform:scaleX(0.9711);transform-origin:0 0;">Healthix</div>
<svg class="r" style="left:3130px;top:1546.5px" width="28" height="28"><circle cx="14" cy="13.5" r="11" fill="none" stroke="#cfcfd3" stroke-width="3.4"/><path d="M7 20.5 L21 6.5" stroke="#cfcfd3" stroke-width="3.4"/></svg>
<div class="r" style="left:500px;top:1605.9px;width:304.29999999999995px;height:39.399999999999864px;border:2.5px solid #3c4592;border-radius:9px;box-sizing:border-box;background:#fff;"></div>
<div class="t" style="left:566.50px;top:1615.80px;font-size:17.88px;line-height:21px;color:#4b5598;letter-spacing:2.58px;">DOWNLOAD ALL</div>
<div class="r" style="left:846px;top:1614.3px;width:26px;height:26.0px;border:2px solid #c6c6ca;border-radius:4px;box-sizing:border-box;background:#fff;"></div>
<div class="t" style="left:893.00px;top:1609.42px;font-size:28.49px;line-height:34px;color:#85858c;transform:scaleX(0.9179);transform-origin:0 0;">Include Special Auths</div>
<div class="r" style="left:2913px;top:1608.5px;width:134px;height:35.0px;border:2.5px solid #3c4592;border-radius:9px;box-sizing:border-box;background:#fff;"></div>
<div class="t" style="left:2942.00px;top:1615.85px;font-size:17.44px;line-height:21px;color:#4b5598;letter-spacing:1.90px;">ASSIGN</div>
<div class="r" style="left:3080px;top:1611.5px;width:2px;height:34.0px;background:#d3d3d6;"></div>
<svg class="r" style="left:3126px;top:1614.5px" width="44" height="24"><circle cx="11.5" cy="12" r="7.5" fill="#cbcbd0"/><path d="M18 12 H24" stroke="#cbcbd0" stroke-width="2"/><circle cx="33" cy="12" r="7" fill="#fff" stroke="#cbcbd0" stroke-width="2"/></svg>
<div class="r" style="left:336px;top:1701.5px;width:2891px;height:7.0px;background:#e4e4e6;"></div>
<div class="r" style="left:319px;top:1752.4px;width:35px;height:34.0px;background:#fff;"></div>
<div class="r" style="left:323px;top:1756.4px;width:26.600000000000023px;height:26.0px;background:#c9c9ce;border-radius:3px;"></div>
<div class="r" style="left:328.5px;top:1767.4px;width:15.199999999999989px;height:4.0px;background:#fff;"></div>
<svg class="r" style="left:376px;top:1720.2px" width="98" height="98"><circle cx="49" cy="49" r="45" fill="none" stroke="#3f4fb8" stroke-width="4.3"/></svg>
<div class="t" style="left:405.70px;top:1746.20px;font-size:38.95px;line-height:47px;color:#3f4fb8;-webkit-text-stroke:0.9px #3f4fb8;transform:scaleX(0.8173);transform-origin:0 0;">AS</div>
<div class="t" style="left:500.40px;top:1749.61px;font-size:34.3px;line-height:41px;color:#41414a;-webkit-text-stroke:0.8px #41414a;transform:scaleX(0.8982);transform-origin:0 0;">Agnes Skinner</div>
<div class="r" style="left:1173px;top:1771.5px;width:18px;height:2.0px;background:#4a4a52;"></div>
<div class="t" style="left:1616.40px;top:1754.72px;font-size:27.62px;line-height:33px;color:#46464e;transform:scaleX(0.9332);transform-origin:0 0;">Jan. 04, 1965</div>
<div class="t" style="left:1912.50px;top:1754.72px;font-size:27.62px;line-height:33px;color:#46464e;letter-spacing:0.02px;">2234</div>
<div class="t" style="left:2209.00px;top:1754.72px;font-size:27.62px;line-height:33px;color:#46464e;transform:scaleX(0.9502);transform-origin:0 0;">Nov. 27, 2019</div>
<div class="r" style="left:2504px;top:1771.5px;width:255px;height:9.0px;border:1.5px solid #d6d6d9;border-radius:5px;box-sizing:border-box;background:#fff;"></div>
<div class="r" style="left:2504px;top:1771.5px;width:51px;height:9.0px;background:#2d9de0;border-radius:5px;"></div>
<div class="r" style="left:2836px;top:1754px;width:82px;height:35px;background:#e6e6e9;border-radius:18px;"></div>
<div class="t" style="left:2872.00px;top:1757.64px;font-size:23.84px;line-height:29px;color:#fff;font-weight:700;">0</div>
<div class="r" style="left:3015px;top:1749px;width:136px;height:42px;background:#a8a8ae;border-radius:21px;"></div>
<div class="t" style="left:3076.50px;top:1754.68px;font-size:26.89px;line-height:32px;color:#fff;font-weight:700;">1</div>
<div class="t" style="left:500.30px;top:1843.95px;font-size:18.9px;line-height:23px;color:#7c8693;font-weight:700;letter-spacing:2.20px;transform:scaleX(0.8965);transform-origin:0 0;">RECORD SOURCE</div>
<div class="t" style="left:1616.00px;top:1843.95px;font-size:18.9px;line-height:23px;color:#7c8693;font-weight:700;letter-spacing:2.20px;transform:scaleX(0.9533);transform-origin:0 0;">VENDOR</div>
<div class="t" style="left:1911.40px;top:1843.95px;font-size:18.9px;line-height:23px;color:#7c8693;font-weight:700;letter-spacing:2.20px;transform:scaleX(0.9630);transform-origin:0 0;">EXPIRATION</div>
<div class="t" style="left:2208.20px;top:1843.95px;font-size:18.9px;line-height:23px;color:#7c8693;font-weight:700;letter-spacing:2.20px;transform:scaleX(0.9097);transform-origin:0 0;">CONSENT STATUS</div>
<div class="t" style="left:2981.40px;top:1843.95px;font-size:18.9px;line-height:23px;color:#7c8693;font-weight:700;letter-spacing:2.20px;transform:scaleX(0.8989);transform-origin:0 0;">SEARCH STATUS</div>
<div class="r" style="left:500px;top:1880px;width:2684px;height:61px;background:#e9f3fc;"></div>
<div class="r" style="left:500px;top:1879.25px;width:2684px;height:1.5px;background:#d6d6da;"></div>
<div class="r" style="left:455px;top:1895px;width:26px;height:26px;border:2px solid #c6c6ca;border-radius:4px;box-sizing:border-box;background:#fff;"></div>
<div class="t" style="left:500.50px;top:1893.62px;font-size:29.94px;line-height:36px;color:#101016;-webkit-text-stroke:0.9px #101016;transform:scaleX(0.9091);transform-origin:0 0;">Lakeland Valley Hospital</div>
<div class="t" style="left:1616.70px;top:1895.22px;font-size:28.2px;line-height:34px;color:#2e2e36;transform:scaleX(0.8934);transform-origin:0 0;">Epic</div>
<svg class="r" style="left:1866px;top:1897.5px" width="27" height="27" viewBox="0 0 40 40"><circle cx="20" cy="20" r="19.6" fill="#ee0d0d"/><path fill="#fff" d="M20 6.5 C21.3 6.5 22 7.3 22 8.4 C25.5 9.6 27.5 12.8 27.5 17 V22 C27.5 24.5 29 26 31.5 26.5 V28.5 H8.5 V26.5 C11 26 12.5 24.5 12.5 22 V17 C12.5 12.8 14.5 9.6 18 8.4 C18 7.3 18.7 6.5 20 6.5 Z"/><path fill="#fff" d="M16.5 30 H23.5 C23.5 32.2 22 33.5 20 33.5 C18 33.5 16.5 32.2 16.5 30 Z"/></svg>
<div class="t" style="left:1912.50px;top:1895.22px;font-size:28.2px;line-height:34px;color:#1e1e26;transform:scaleX(0.9198);transform-origin:0 0;">Expires Today</div>
<div class="t" style="left:2208.00px;top:1895.22px;font-size:28.2px;line-height:34px;color:#2e2e36;transform:scaleX(0.9350);transform-origin:0 0;">Special Auth</div>
<svg class="r" style="left:2467px;top:1894px" width="16" height="36"><path d="M3 2 L12 18 L3 34" fill="none" stroke="#c9c9cd" stroke-width="1.6"/></svg>
<div class="r" style="left:2826px;top:1882px;width:337px;height:56px;border:2px solid #b0b0b5;border-radius:9px;box-sizing:border-box;background:#fff;box-shadow:0 6px 14px rgba(0,0,0,0.12);"></div>
<div class="r" style="left:2994px;top:1882px;width:2px;height:56px;background:#b0b0b5;"></div>
<div class="r" style="left:2868.5px;top:1897px;width:26.5px;height:27px;background:#cbcbd0;border-radius:3px;"></div>
<div class="r" style="left:2872px;top:1909px;width:19.5px;height:3.5px;background:#fff;"></div>
<div class="r" style="left:2880px;top:1900.5px;width:3.5px;height:20.0px;background:#fff;"></div>
<div class="t" style="left:2908.00px;top:1897.94px;font-size:23.26px;line-height:28px;color:#8c8c92;letter-spacing:0.30px;">ALL</div>
<div class="r" style="left:3037px;top:1897px;width:26.5px;height:27px;background:#cbcbd0;border-radius:3px;"></div>
<div class="r" style="left:3040.5px;top:1909px;width:19.5px;height:3.5px;background:#fff;"></div>
<div class="t" style="left:3076.00px;top:1897.94px;font-size:23.26px;line-height:28px;color:#8c8c92;letter-spacing:0.80px;">ALL</div>
<div class="r" style="left:500px;top:1940.25px;width:2684px;height:1.5px;background:#d6d6da;"></div>
<div class="r" style="left:455px;top:1956px;width:26px;height:26px;background:#e3e3e7;border-radius:4px;"></div>
<div class="t" style="left:500.50px;top:1953.71px;font-size:31.11px;line-height:37px;color:#44444d;-webkit-text-stroke:0.45px #44444d;transform:scaleX(0.8930);transform-origin:0 0;">Unknown Organization</div>
<div class="t" style="left:1616.70px;top:1956.22px;font-size:28.2px;line-height:34px;color:#3f3f48;transform:scaleX(0.9316);transform-origin:0 0;">Veradigm</div>
<div class="t" style="left:2982.00px;top:1956.22px;font-size:28.2px;line-height:34px;color:#3a3a42;transform:scaleX(0.9228);transform-origin:0 0;">Pending</div>
<div class="r" style="left:500px;top:2001.25px;width:2684px;height:1.5px;background:#d6d6da;"></div>
<div class="r" style="left:455px;top:2017px;width:26px;height:26px;background:#e3e3e7;border-radius:4px;"></div>
<div class="t" style="left:500.50px;top:2014.71px;font-size:31.11px;line-height:37px;color:#44444d;-webkit-text-stroke:0.45px #44444d;transform:scaleX(0.8930);transform-origin:0 0;">Unknown Organization</div>
<div class="t" style="left:1616.70px;top:2017.22px;font-size:28.2px;line-height:34px;color:#3f3f48;transform:scaleX(0.9316);transform-origin:0 0;">Veradigm</div>
<div class="t" style="left:2982.00px;top:2017.22px;font-size:28.2px;line-height:34px;color:#3a3a42;transform:scaleX(0.9228);transform-origin:0 0;">Pending</div>
<div class="r" style="left:500px;top:2062.25px;width:2684px;height:1.5px;background:#d6d6da;"></div>
<div class="r" style="left:455px;top:2078px;width:26px;height:26px;background:#e3e3e7;border-radius:4px;"></div>
<div class="t" style="left:500.50px;top:2075.71px;font-size:31.11px;line-height:37px;color:#44444d;-webkit-text-stroke:0.45px #44444d;transform:scaleX(0.8930);transform-origin:0 0;">Unknown Organization</div>
<div class="t" style="left:1616.70px;top:2078.22px;font-size:28.2px;line-height:34px;color:#3f3f48;transform:scaleX(0.9316);transform-origin:0 0;">Veradigm</div>
<div class="t" style="left:2982.00px;top:2078.22px;font-size:28.2px;line-height:34px;color:#3a3a42;transform:scaleX(0.9228);transform-origin:0 0;">Pending</div>
<div class="r" style="left:363.5px;top:2054px;width:246.0px;height:76px;background:#fcefc5;border-radius:10px 10px 0 0;box-shadow:0 0 12px rgba(0,0,0,0.10);"></div>
<div class="t" style="left:406.00px;top:2066.41px;font-size:34.88px;line-height:42px;color:#3f3b32;-webkit-text-stroke:1.0px #3f3b32;transform:scaleX(0.8796);transform-origin:0 0;">Need Help?</div>
<div class="r" style="left:0px;top:2114.5px;width:3600px;height:5.5px;background:#e7f1fa;"></div>
</body></html>
